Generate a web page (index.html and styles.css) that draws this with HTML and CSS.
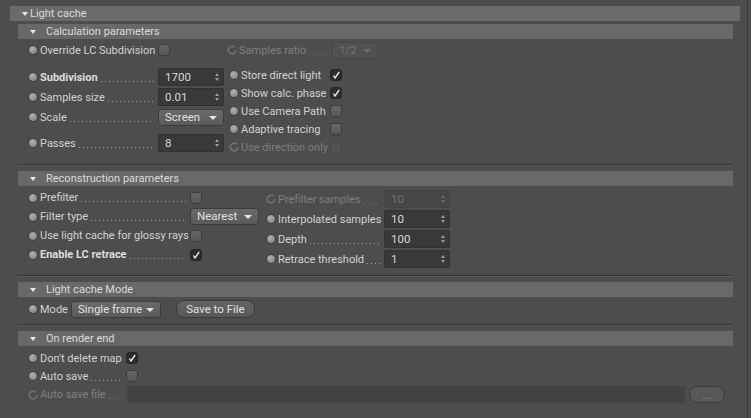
FILE: index.html
```html
<!DOCTYPE html>
<html lang="en">
<head>
    <meta charset="UTF-8">
    <title>Light cache</title>
    <link rel="stylesheet" href="styles.css">
</head>
<body>
<div class="panel">
    <div class="bar main-bar"><span class="tri"></span>Light cache</div>

    <!-- calculation -->
    <div class="bar sub-bar"><span class="tri"></span>Calculation parameters</div>
    <div class="calc">
        <div class="row r1">
            <div class="cell c1"><span class="dot"></span><span>Override LC Subdivision</span></div>
            <span class="chk"></span>
            <div class="cell c1r dis"><svg class="arc" viewBox="0 0 9 9"><path d="M6.9 2.1 A3.4 3.4 0 1 0 7.9 4.5"/></svg><span>Samples ratio</span><span class="lead"></span></div>
            <div class="drop off w46">1/2</div>
        </div>
        <div class="cols">
            <div class="col-l">
                <div class="lrow"><div class="cell c1"><span class="dot"></span><b>Subdivision</b><span class="lead"></span></div><div class="spin w66">1700</div></div>
                <div class="lrow"><div class="cell c1"><span class="dot"></span><span>Samples size</span><span class="lead"></span></div><div class="spin w66">0.01</div></div>
                <div class="lrow"><div class="cell c1"><span class="dot"></span><span>Scale</span><span class="lead"></span></div><div class="drop w66">Screen</div></div>
                <div class="lrow passes"><div class="cell c1"><span class="dot"></span><span>Passes</span><span class="lead"></span></div><div class="spin w66">8</div></div>
            </div>
            <div class="col-r">
                <div class="rrow"><div class="cell c2"><span class="dot"></span><span>Store direct light</span></div><span class="chk on"><svg viewBox="0 0 12 12"><path d="M3 6.6 L4.8 9.6 L9.8 2.4"/></svg></span></div>
                <div class="rrow"><div class="cell c2"><span class="dot"></span><span>Show calc. phase</span></div><span class="chk on"><svg viewBox="0 0 12 12"><path d="M3 6.6 L4.8 9.6 L9.8 2.4"/></svg></span></div>
                <div class="rrow"><div class="cell c2"><span class="dot"></span><span>Use Camera Path</span></div><span class="chk"></span></div>
                <div class="rrow"><div class="cell c2"><span class="dot"></span><span>Adaptive tracing</span></div><span class="chk"></span></div>
                <div class="rrow"><div class="cell c2 dis"><svg class="arc" viewBox="0 0 9 9"><path d="M6.9 2.1 A3.4 3.4 0 1 0 7.9 4.5"/></svg><span>Use direction only</span></div><span class="chk off"></span></div>
            </div>
        </div>
    </div>
    <div class="sep"></div>

    <!-- reconstruction -->
    <div class="bar sub-bar"><span class="tri"></span>Reconstruction parameters</div>
    <div class="recon">
        <div class="col-l2">
            <div class="lrow2"><div class="cell c3"><span class="dot"></span><span>Prefilter</span><span class="lead"></span></div><span class="chk"></span></div>
            <div class="lrow2"><div class="cell c3"><span class="dot"></span><span>Filter type</span><span class="lead"></span></div><div class="drop w69">Nearest</div></div>
            <div class="lrow2"><div class="cell c3"><span class="dot"></span><span>Use light cache for glossy rays</span></div><span class="chk"></span></div>
            <div class="lrow2"><div class="cell c3"><span class="dot"></span><b>Enable LC retrace</b><span class="lead"></span></div><span class="chk on"><svg viewBox="0 0 12 12"><path d="M3 6.6 L4.8 9.6 L9.8 2.4"/></svg></span></div>
        </div>
        <div class="col-r2">
            <div class="rrow2"><div class="cell c4 dis"><svg class="arc" viewBox="0 0 9 9"><path d="M6.9 2.1 A3.4 3.4 0 1 0 7.9 4.5"/></svg><span>Prefilter samples</span><span class="lead"></span></div><div class="spin off w66">10</div></div>
            <div class="rrow2"><div class="cell c4"><span class="dot"></span><span>Interpolated samples</span></div><div class="spin w66">10</div></div>
            <div class="rrow2"><div class="cell c4"><span class="dot"></span><span>Depth</span><span class="lead"></span></div><div class="spin w66">100</div></div>
            <div class="rrow2"><div class="cell c4"><span class="dot"></span><span>Retrace threshold</span><span class="lead"></span></div><div class="spin w66">1</div></div>
        </div>
    </div>
    <div class="sep tight"></div>

    <!-- mode -->
    <div class="bar sub-bar"><span class="tri"></span>Light cache Mode</div>
    <div class="mode">
        <span class="dot"></span><span>Mode</span>
        <div class="drop w90">Single frame</div>
        <button class="btn">Save to File</button>
    </div>
    <div class="sep tight"></div>

    <!-- on render end -->
    <div class="bar sub-bar"><span class="tri"></span>On render end</div>
    <div class="end">
        <div class="erow"><div class="cell c5"><span class="dot"></span><span>Don't delete map</span></div><span class="chk on"><svg viewBox="0 0 12 12"><path d="M3 6.6 L4.8 9.6 L9.8 2.4"/></svg></span></div>
        <div class="erow"><div class="cell c5"><span class="dot"></span><span>Auto save</span><span class="lead"></span></div><span class="chk"></span></div>
        <div class="erow file"><div class="cell c5 dis"><svg class="arc" viewBox="0 0 9 9"><path d="M6.9 2.1 A3.4 3.4 0 1 0 7.9 4.5"/></svg><span>Auto save file</span><span class="lead"></span></div><div class="path"></div><button class="btn dots">...</button></div>
    </div>
</div>
</body>
</html>
```

FILE: styles.css
```css
body {
    margin: 0;
    background-color: #4d4d4d;
    font-family: Roboto, "Noto Sans", sans-serif;
    font-size: 11px;
    color: #d2d2d2;
}
.panel {
    width: 748px;
    height: 418px;
    box-sizing: border-box;
    padding: 6px 0 0 10px;
    border-right: 1px solid #3a3a3a;
}
.bar {
    display: flex;
    align-items: center;
    height: 15px;
    background-color: #686868;
    color: #dadada;
    font-size: 11px;
}
.main-bar {
    width: 730px;
    padding-left: 12px;
    box-sizing: border-box;
    background-color: #6b6b6b;
}
.main-bar .tri {
    margin-right: 2px;
}
.sub-bar {
    width: 715px;
    margin: 3px 0 0 8px;
    padding-left: 12px;
    box-sizing: border-box;
}
.sep + .sub-bar {
    margin-top: 5px;
}
.sub-bar .tri {
    margin-right: 10px;
}
.tri {
    width: 0;
    height: 0;
    border-left: 3px solid transparent;
    border-right: 3px solid transparent;
    border-top: 4px solid #e8e8e8;
}
.sep {
    width: 715px;
    margin: 8px 0 0 8px;
    border-top: 1px solid #363636;
    border-bottom: 1px solid #5a5a5a;
}
.sep.tight {
    margin-top: 6px;
}
.cell {
    display: flex;
    align-items: center;
    flex: none;
    white-space: nowrap;
}
.cell b {
    font-weight: bold;
    color: #dedede;
}
.dot {
    flex: none;
    width: 8px;
    height: 8px;
    border-radius: 50%;
    border: 1px solid #3e3e3e;
    background: radial-gradient(circle at 40% 35%, #b0b0b0, #7a7a7a);
    margin-right: 2px;
}
.arc {
    flex: none;
    width: 10px;
    height: 10px;
    margin-right: 2px;
}
.arc path {
    fill: none;
    stroke: #6e6e6e;
    stroke-width: 1.6;
}
.dis {
    color: #7f7f7f;
}
.lead {
    flex: 1;
    height: 9px;
    margin: 0 4px 0 3px;
    background-image: linear-gradient(to right, #a0a0a0 1px, transparent 1px);
    background-size: 4px 1px;
    background-repeat: repeat-x;
    background-position: left bottom;
}
.dis .lead {
    background-image: linear-gradient(to right, #777 1px, transparent 1px);
}
.chk {
    flex: none;
    width: 12px;
    height: 12px;
    box-sizing: border-box;
    border: 1px solid #3c3c3c;
    border-radius: 3px;
    background: linear-gradient(#666, #575757);
}
.chk.on {
    background: #2d2d2d;
    border-color: #262626;
}
.chk.off {
    background: #535353;
    border-color: #474747;
}
.chk svg {
    display: block;
    width: 10px;
    height: 10px;
}
.chk svg path {
    fill: none;
    stroke: #eeeeee;
    stroke-width: 1.6;
}
.spin {
    position: relative;
    flex: none;
    height: 18px;
    box-sizing: border-box;
    padding-left: 6px;
    line-height: 16px;
    background-color: #393939;
    border: 1px solid #323232;
    border-radius: 2px;
    color: #d8d8d8;
    font-size: 11.5px;
}
.spin::before, .spin::after {
    content: "";
    position: absolute;
    right: 4px;
    border-left: 2px solid transparent;
    border-right: 2px solid transparent;
}
.spin::before {
    top: 4px;
    border-bottom: 3px solid #9a9a9a;
}
.spin::after {
    top: 9px;
    border-top: 3px solid #9a9a9a;
}
.spin.off {
    background-color: #474747;
    border-color: #444;
    color: #6f6f6f;
}
.spin.off::before { border-bottom-color: #666; }
.spin.off::after { border-top-color: #666; }
.drop {
    position: relative;
    flex: none;
    height: 17px;
    box-sizing: border-box;
    padding-left: 6px;
    line-height: 15px;
    border: 1px solid #3c3c3c;
    border-radius: 3px;
    background: linear-gradient(#6a6a6a, #5a5a5a);
    color: #e0e0e0;
    font-size: 11.5px;
}
.drop::after {
    content: "";
    position: absolute;
    right: 6px;
    top: 6px;
    border-left: 4px solid transparent;
    border-right: 4px solid transparent;
    border-top: 4px solid #e6e6e6;
}
.drop.off {
    background: #515151;
    border-color: #474747;
    color: #737373;
}
.drop.off::after {
    border-top-color: #6c6c6c;
}
.w46 { width: 46px; }
.w66 { width: 66px; }
.w69 { width: 69px; }
.w90 { width: 90px; }
.btn {
    height: 18px;
    box-sizing: border-box;
    padding: 0;
    border: 1px solid #3a3a3a;
    border-radius: 8px;
    background: linear-gradient(#646464, #585858);
    color: #e0e0e0;
    font-family: Roboto, "Noto Sans", sans-serif;
    font-size: 11.5px;
}

/* calculation */
.calc {
    padding-left: 18px;
}
.r1 {
    display: flex;
    align-items: center;
    height: 16px;
    margin-top: 3px;
}
.c1 { width: 130px; }
.c1r { width: 105px; margin-left: 57px; }
.c2 { width: 101px; }
.cols {
    display: flex;
    margin-top: 8px;
}
.col-l {
    width: 198px;
    padding-top: 1px;
}
.lrow {
    display: flex;
    align-items: center;
    height: 20px;
}
.lrow.passes {
    margin-top: 6px;
}
.col-r {
    padding-left: 3px;
}
.rrow {
    display: flex;
    align-items: center;
    height: 18px;
}

/* reconstruction */
.recon {
    display: flex;
    padding-left: 18px;
}
.col-l2 {
    width: 238px;
    padding-top: 2px;
}
.c3 { width: 162px; }
.lrow2 {
    display: flex;
    align-items: center;
    height: 19px;
}
.col-r2 {
    padding-top: 3px;
}
.c4 { width: 118px; }
.rrow2 {
    display: flex;
    align-items: center;
    height: 20px;
}

/* mode */
.mode {
    display: flex;
    align-items: center;
    height: 18px;
    margin-top: 3px;
    padding-left: 18px;
}
.mode .drop {
    margin-left: 3px;
}
.mode .btn {
    width: 79px;
    margin-left: 15px;
}

/* render end */
.end {
    padding-left: 18px;
    margin-top: 3px;
}
.erow {
    display: flex;
    align-items: center;
    height: 18px;
}
.erow.file {
    height: 19px;
}
.c5 { width: 98px; }
.path {
    width: 558px;
    height: 17px;
    margin-left: 1px;
    background-color: #434343;
}
.btn.dots {
    width: 36px;
    height: 17px;
    margin-left: 4px;
    color: #9a9a9a;
    background: #575757;
}
```
